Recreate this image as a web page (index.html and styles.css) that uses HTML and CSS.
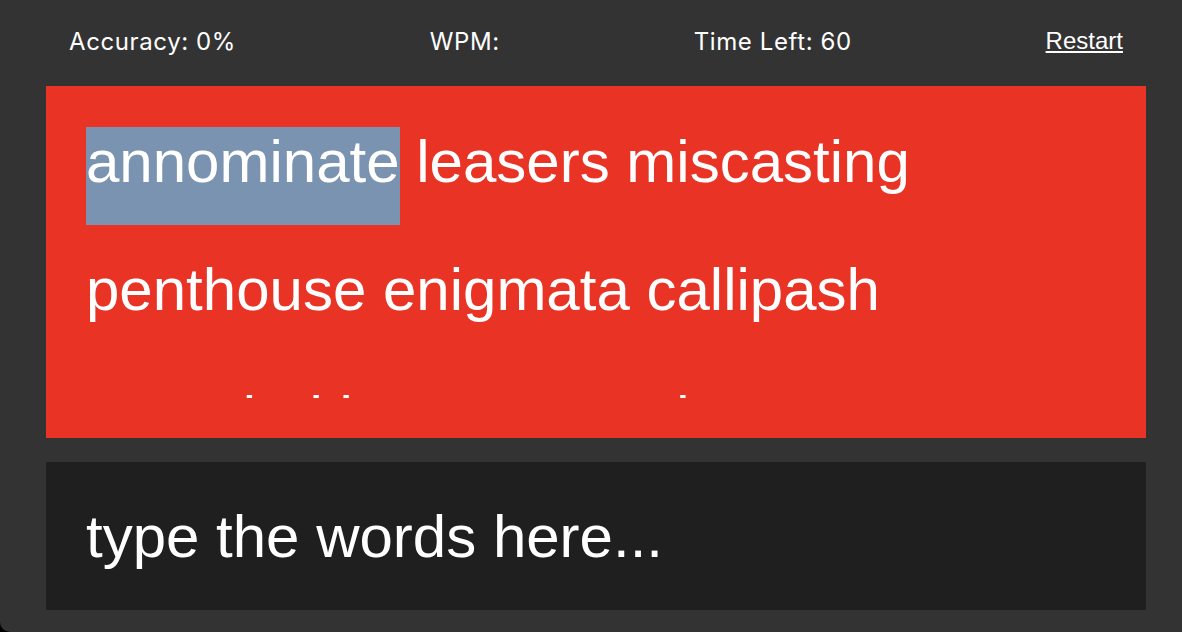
FILE: index.html
```html
<!DOCTYPE html>
<html lang="en">
<head>
<meta charset="utf-8">
<title>Typing Test</title>
<link rel="stylesheet" href="styles.css">
</head>
<body>
<div class="app">
  <header class="stats">
    <span class="stat">Accuracy: 0%</span>
    <span class="stat">WPM: </span>
    <span class="stat">Time Left: 60</span>
    <a class="restart" href="#">Restart</a>
  </header>
  <section class="board">
    <div class="words">
      <span class="word current">annominate</span> <span class="word">leasers</span> <span class="word">miscasting</span> <span class="word">penthouse</span> <span class="word">enigmata</span> <span class="word">callipash</span> <span class="word">vascularities</span> <span class="word">suppressive</span> <span class="word">ravenous</span> <span class="word">pinafore</span> <span class="word">turbulence</span> <span class="word">woodsmoke</span>
    </div>
  </section>
  <input class="entry" type="text" placeholder="type the words here...">
</div>
</body>
</html>
```

FILE: styles.css
```css
html {
  background: #000;
}

body {
  margin: 0;
}

.app {
  box-sizing: border-box;
  height: 632px;
  padding: 0 36px 0 46px;
  background: #333333;
  border-bottom-left-radius: 10px;
  display: flex;
  flex-direction: column;
}

.stats {
  box-sizing: border-box;
  height: 86px;
  padding: 0 23px 4px;
  display: flex;
  align-items: center;
  justify-content: space-between;
  color: #ffffff;
  font-family: Inter, "Noto Sans", sans-serif;
  font-size: 24px;
  letter-spacing: 0.6px;
}

.restart {
  color: #ffffff;
  font-family: "Liberation Sans", Arial, sans-serif;
  font-size: 24px;
  letter-spacing: 0;
  text-decoration: underline;
}

.board {
  box-sizing: border-box;
  height: 352px;
  padding: 12px 40px 40px;
  background: #e93325;
}

.words {
  height: 300px;
  overflow: hidden;
  font-family: "Liberation Sans", Arial, sans-serif;
  font-size: 60px;
  line-height: 128px;
  color: #ffffff;
}

.word {
  display: inline-block;
  line-height: 70px;
  padding-bottom: 28px;
  vertical-align: baseline;
}

.word.current {
  background: #7a93b0;
}

.entry {
  box-sizing: border-box;
  display: block;
  width: 100%;
  height: 148px;
  margin: 24px 0 0;
  padding: 0 40px;
  border: none;
  outline: none;
  background: #1f1f1f;
  color: #ffffff;
  font-family: "Liberation Sans", Arial, sans-serif;
  font-size: 60px;
}

.entry::placeholder {
  color: #ffffff;
  opacity: 1;
}
```
